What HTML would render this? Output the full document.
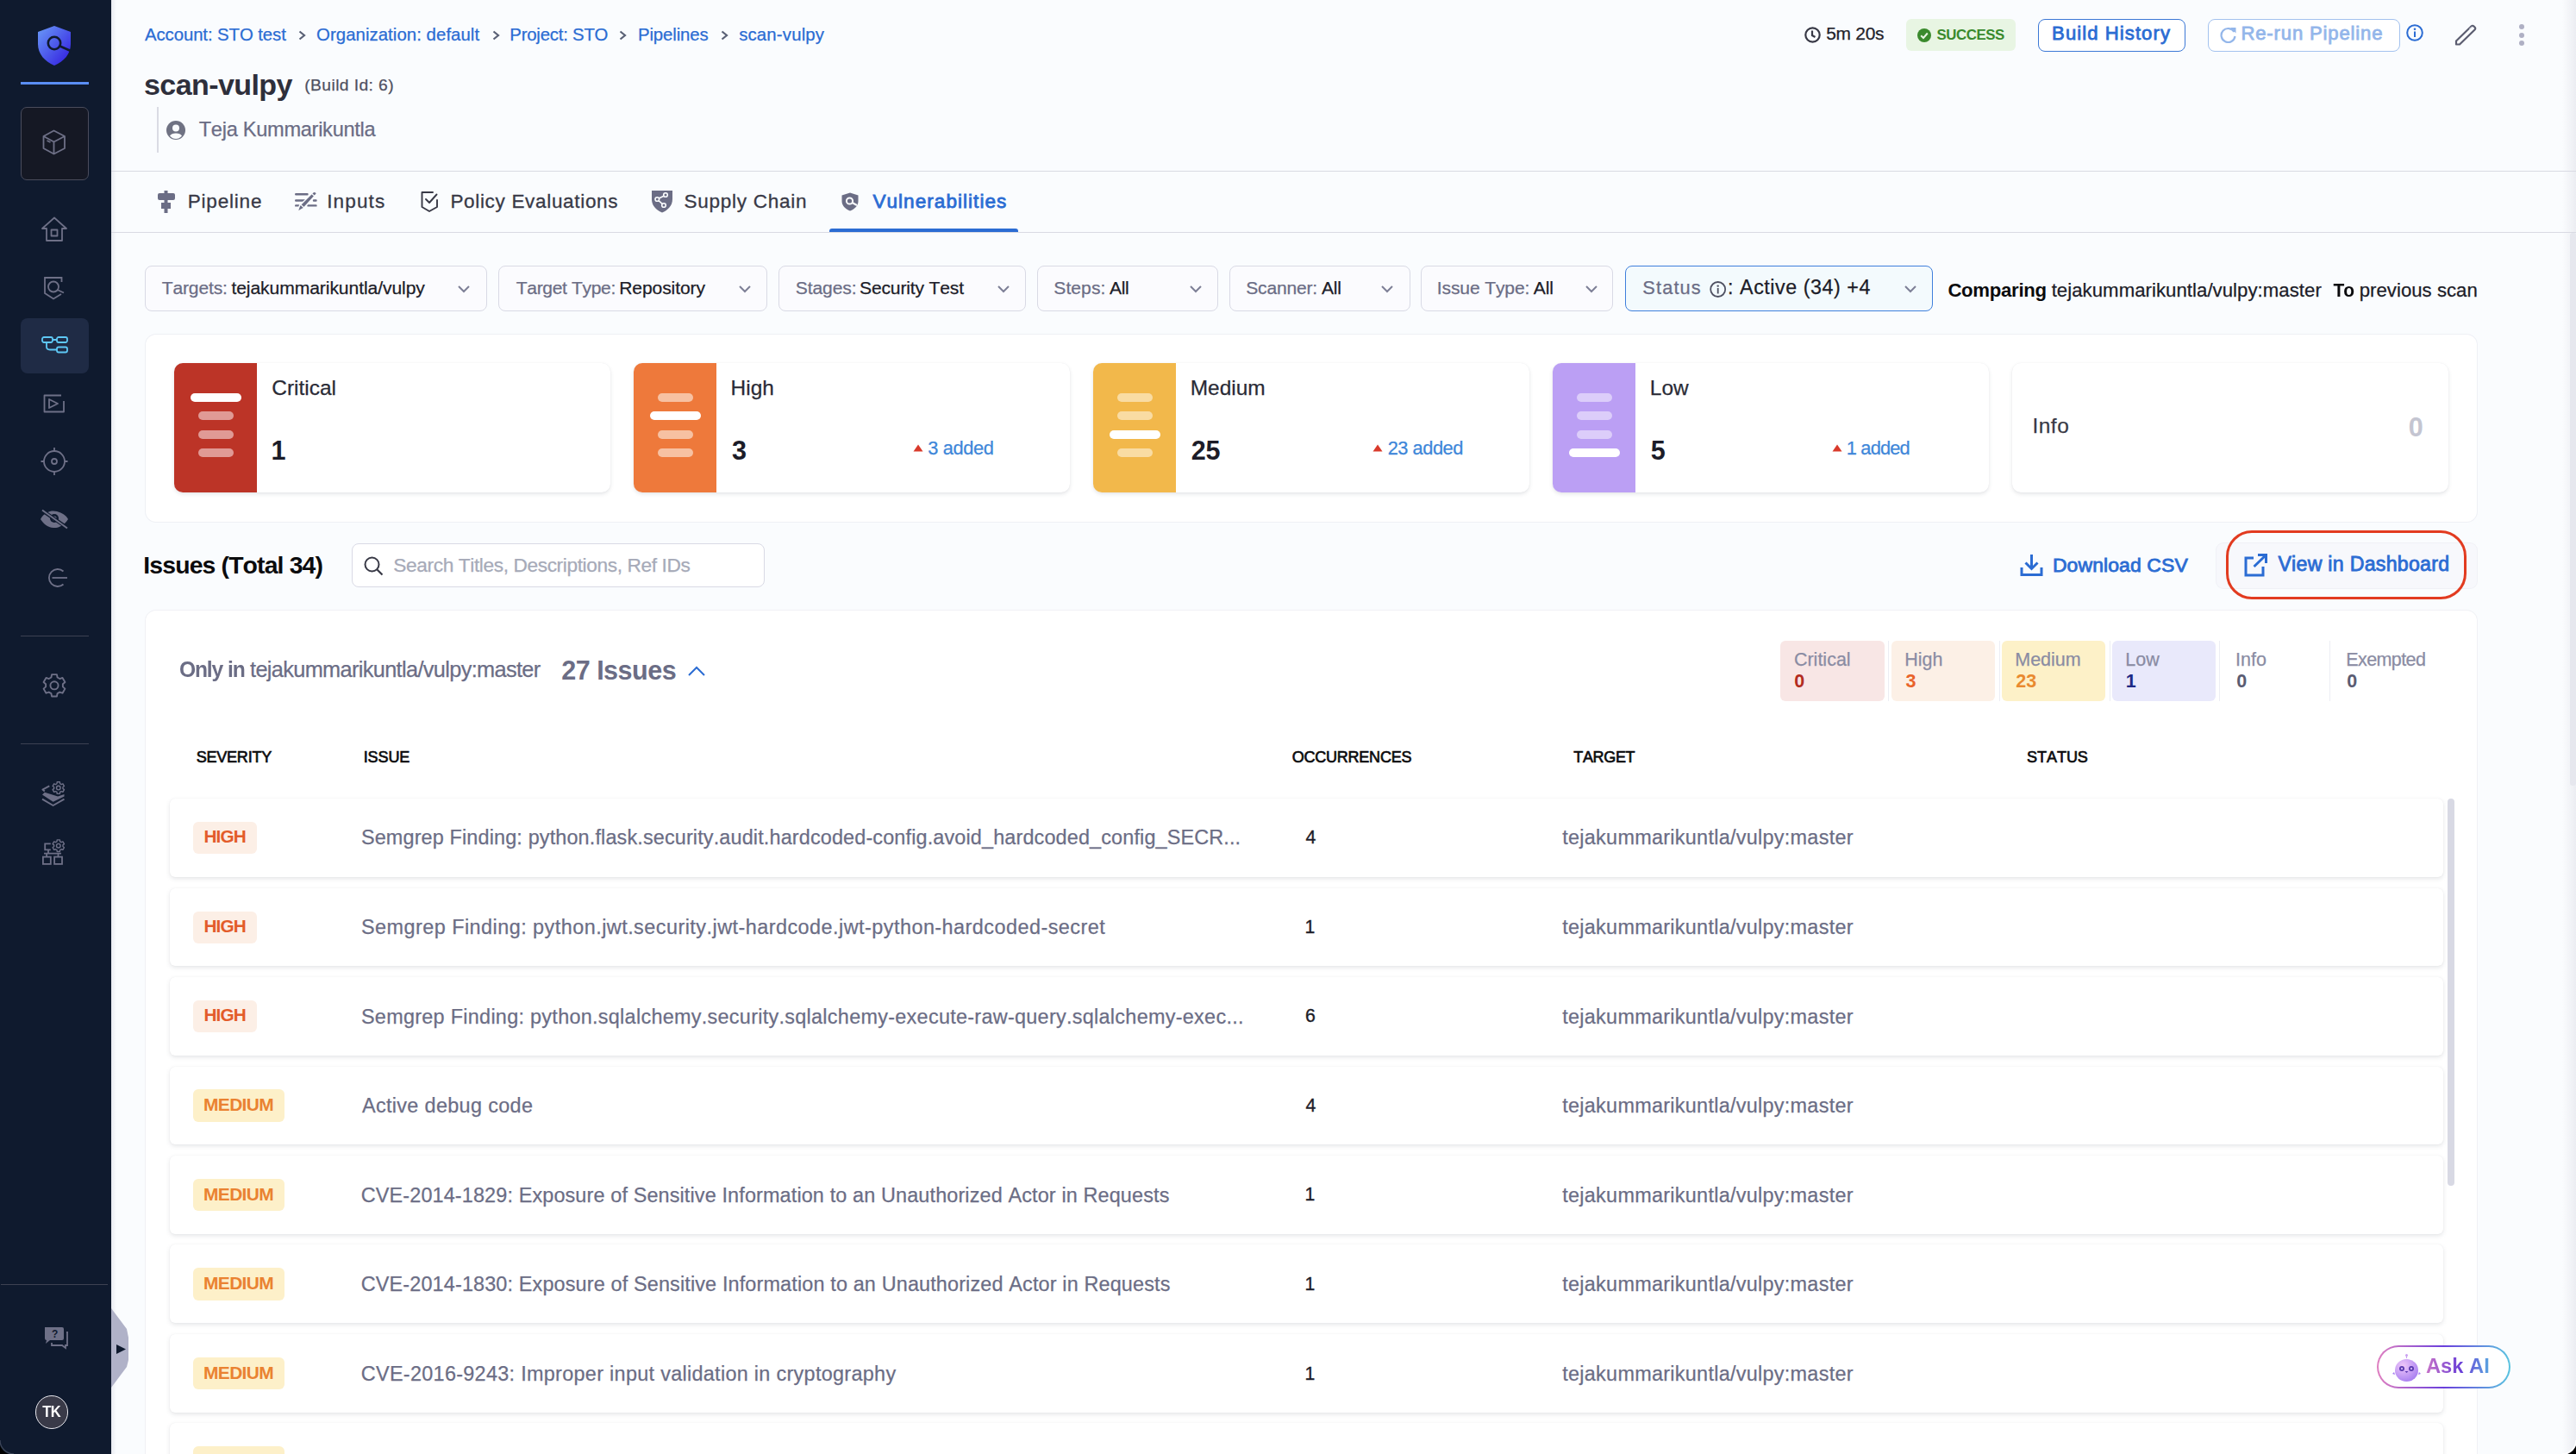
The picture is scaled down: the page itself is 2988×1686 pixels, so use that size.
<!DOCTYPE html>
<html><head><meta charset="utf-8"><title>scan-vulpy</title>
<style>
html,body{margin:0;padding:0;width:2988px;height:1686px;overflow:hidden;background:#000;}
body{position:relative;font-family:"Liberation Sans",sans-serif;font-kerning:none;}
.t{position:absolute;white-space:nowrap;line-height:1;}
.r{position:absolute;display:block;}
</style></head><body>
<div class="r" style="left:0.00px;top:0.00px;width:2988.00px;height:1686.00px;background:#fafcfe;"></div>
<div class="r" style="left:0.00px;top:0.00px;width:129.00px;height:1686.00px;background:#0f1a2e;"></div>
<div class="r" style="left:129.00px;top:0.00px;width:6.00px;height:1686.00px;background:linear-gradient(90deg,#e9ebf1,#fafcfe);"></div>
<div class="r" style="left:2972.00px;top:0.00px;width:16.00px;height:1686.00px;background:linear-gradient(90deg,rgba(230,231,238,0),#ecedf2);"></div>
<svg class="r" style="left:42.00px;top:29.00px;" width="42" height="48" viewBox="0 0 42 48"><defs><linearGradient id="lg" x1="0" y1="0" x2="1" y2="1"><stop offset="0" stop-color="#6a9bf8"/><stop offset="1" stop-color="#2f17de"/></linearGradient></defs>
<path d="M21 1 L40 8 L40 22 C40 34 32 42 21 47 C10 42 2 34 2 22 L2 8 Z" fill="url(#lg)"/>
<circle cx="21" cy="21" r="7.2" fill="none" stroke="#0f1a2e" stroke-width="2.6"/>
<path d="M27.5 24.5 L40 30" stroke="#0f1a2e" stroke-width="2.6"/></svg>
<div class="r" style="left:24.00px;top:95.00px;width:79.00px;height:3.00px;background:#5a8ef5;"></div>
<div class="r" style="left:24.00px;top:124.00px;width:79.00px;height:85.00px;background:#151824;border:1.5px solid #4a4c5c;border-radius:7px;box-sizing:border-box;"></div>
<svg class="r" style="left:49.00px;top:150.00px;" width="28" height="30" viewBox="0 0 28 30"><g fill="none" stroke="#6e7087" stroke-width="1.8" stroke-linejoin="round"><path d="M13.5 1.5 L26 8 L26 22 L13.5 28.5 L1.5 22 L1.5 8 Z"/><path d="M1.5 8 L13.5 14.5 L26 8 M13.5 14.5 L13.5 28.5"/><path d="M5.5 13 L9.5 15"/></g></svg>
<svg class="r" style="left:47.00px;top:251.00px;" width="32" height="30" viewBox="0 0 32 30"><g fill="none" stroke="#6e7087" stroke-width="1.8" stroke-linejoin="round"><path d="M2 14 L16 1.5 L30 14 L25 14 L25 28 L7 28 L7 14 Z"/><rect x="12.5" y="15.5" width="7" height="7"/></g></svg>
<svg class="r" style="left:50.00px;top:320.00px;" width="26" height="29" viewBox="0 0 26 29"><g fill="none" stroke="#6e7087" stroke-width="1.8"><path d="M21.5 7 L21.5 2 L2 2 L2 20 L12 26.5 L21 21"/><circle cx="12" cy="12.5" r="6"/><path d="M16.5 16 L24 19.5"/></g></svg>
<div class="r" style="left:24.00px;top:369.00px;width:79.00px;height:64.00px;background:#1f2b45;border-radius:8px;"></div>
<svg class="r" style="left:48.00px;top:390.00px;" width="31" height="20" viewBox="0 0 31 20"><g fill="none" stroke="#5ec8f5" stroke-width="1.8"><rect x="1" y="1" width="12" height="6" rx="2"/><rect x="18" y="1" width="12" height="6" rx="2"/><rect x="18" y="12.5" width="12" height="6" rx="2"/><path d="M13 4 L18 4 M6 7 L6 12 Q6 15.5 10 15.5 L18 15.5"/></g></svg>
<svg class="r" style="left:50.00px;top:457.00px;" width="26" height="22" viewBox="0 0 26 22"><g fill="none" stroke="#6e7087" stroke-width="1.8" stroke-linejoin="round"><path d="M21 1.5 L1.5 1.5 L1.5 20.5 L24 20.5 L24 8"/><path d="M7 6 L17 11 L7 16 Z"/></g></svg>
<svg class="r" style="left:47.00px;top:518.00px;" width="32" height="34" viewBox="0 0 32 34"><g fill="none" stroke="#6e7087" stroke-width="1.8"><circle cx="16" cy="17" r="12"/><circle cx="16" cy="17" r="3"/><path d="M16 1 L16 5 M16 29 L16 33 M0.5 17 L4 17 M28 17 L31.5 17"/></g></svg>
<svg class="r" style="left:46.00px;top:590.00px;" width="34" height="24" viewBox="0 0 34 24"><path d="M1 12 C6 3 14 1.5 20 3 C26 4.5 31 8 33 12 C29 19 22 22.5 16 22 C9 21.5 4 17 1 12 Z" fill="#6e7087"/><circle cx="17" cy="11" r="5" fill="#0f1a2e"/><circle cx="17" cy="11" r="2.6" fill="#6e7087"/><path d="M3 2 L32 22" stroke="#0f1a2e" stroke-width="4"/><path d="M3 1.5 L32 22.5" stroke="#6e7087" stroke-width="2"/></svg>
<svg class="r" style="left:52.00px;top:658.00px;" width="27" height="24" viewBox="0 0 27 24"><g fill="none" stroke="#6e7087" stroke-width="1.8"><path d="M21.5 4.5 A10 10 0 1 0 21.5 19.5"/><path d="M8.5 12 L26 12"/></g></svg>
<div class="r" style="left:24.00px;top:737.00px;width:79.00px;height:1.00px;background:#3d4152;"></div>
<svg class="r" style="left:40.00px;top:770.00px;" width="48" height="50" viewBox="0 0 48 50"><g fill="none" stroke="#6e7087" stroke-width="1.9" stroke-linejoin="round"><path d="M19.42 15.46 L20.08 12.13 L25.92 12.13 L26.58 15.46 L29.29 17.03 L32.51 15.93 L35.43 21.00 L32.88 23.24 L32.88 26.36 L35.43 28.60 L32.51 33.67 L29.29 32.57 L26.58 34.14 L25.92 37.47 L20.08 37.47 L19.42 34.14 L16.71 32.57 L13.49 33.67 L10.57 28.60 L13.12 26.36 L13.12 23.24 L10.57 21.00 L13.49 15.93 L16.71 17.03 Z"/><circle cx="23" cy="24.8" r="4.6"/></g></svg>
<div class="r" style="left:24.00px;top:862.00px;width:79.00px;height:1.00px;background:#3d4152;"></div>
<svg class="r" style="left:40.00px;top:896.00px;" width="48" height="50" viewBox="0 0 48 50"><g fill="none" stroke="#6e7087" stroke-width="1.4" stroke-linejoin="round"><path d="M25.94 12.75 L26.23 10.78 L29.37 10.78 L29.66 12.75 L31.07 13.56 L32.92 12.83 L34.49 15.55 L32.94 16.79 L32.94 18.41 L34.49 19.65 L32.92 22.37 L31.07 21.64 L29.66 22.45 L29.37 24.42 L26.23 24.42 L25.94 22.45 L24.53 21.64 L22.68 22.37 L21.11 19.65 L22.66 18.41 L22.66 16.79 L21.11 15.55 L22.68 12.83 L24.53 13.56 Z"/><circle cx="27.8" cy="17.6" r="2.3"/></g><g fill="none" stroke="#6e7087" stroke-width="1.9" stroke-linejoin="round"><path d="M17.3 15.3 L9.4 19.6 L11.8 21.6"/><path d="M9 30.6 L21.6 38 L34.5 30.6"/></g><path d="M9 25.5 L11.8 22.7 L27.1 27.6 L34.5 25.1 L34.5 27.6 L21.6 33.7 Z" fill="#6e7087"/></svg>
<svg class="r" style="left:40.00px;top:960.00px;" width="48" height="50" viewBox="0 0 48 50"><g fill="none" stroke="#6e7087" stroke-width="1.4" stroke-linejoin="round"><path d="M25.94 15.85 L26.23 13.88 L29.37 13.88 L29.66 15.85 L31.07 16.66 L32.92 15.93 L34.49 18.65 L32.94 19.89 L32.94 21.51 L34.49 22.75 L32.92 25.47 L31.07 24.74 L29.66 25.55 L29.37 27.52 L26.23 27.52 L25.94 25.55 L24.53 24.74 L22.68 25.47 L21.11 22.75 L22.66 21.51 L22.66 19.89 L21.11 18.65 L22.68 15.93 L24.53 16.66 Z"/><circle cx="27.8" cy="20.7" r="2.3"/></g><g fill="none" stroke="#6e7087" stroke-width="1.8"><path d="M18.8 18.4 L12.2 18.4 L12.2 25.4 L18.8 25.4 M16 25.4 L16 29.7 M11 29.7 L31 29.7 M14.1 29.7 L14.1 33.6 M27.5 29.7 L27.5 33.6"/><rect x="9.9" y="33.6" width="8.9" height="8.3"/><rect x="23.1" y="33.6" width="8.9" height="8.3"/></g></svg>
<div class="r" style="left:1.00px;top:1489.00px;width:124.00px;height:1.00px;background:#3d4152;"></div>
<svg class="r" style="left:50.00px;top:1537.00px;" width="30" height="28" viewBox="0 0 30 28"><path d="M2 2 L22 2 Q24 2 24 4 L24 15 Q24 17 22 17 L8 17 L3 21 L4 17 Q2 17 2 15 Z" fill="#6e7087"/><path d="M27 8 L28 8 L28 23 L26 23 L26 26 L22 23 L10 23 L10 20" fill="none" stroke="#6e7087" stroke-width="1.8"/><text x="10" y="14" font-family="Liberation Sans" font-weight="bold" font-size="12" fill="#0f1a2e">?</text></svg>
<div class="r" style="left:40.50px;top:1618.00px;width:38.50px;height:38.50px;background:#393a48;border:1.2px solid #e8e8ee;border-radius:50%;box-sizing:border-box;"></div>
<div class="t" style="left:49.31px;top:1629.92px;font-size:16.57px;letter-spacing:-0.746px;color:#ffffff;transform:scaleY(1.0974);transform-origin:0 14.08px;font-weight:bold;">TK</div>
<svg class="r" style="left:129.00px;top:1517.00px;" width="21" height="92" viewBox="0 0 21 92"><path d="M0 0 L18 24 L20 34 L20 60 L18 68 L0 92 Z" fill="#b0b2c8"/><path d="M6 42 L17 47.5 L6 53 Z" fill="#0f1a2e"/></svg>
<svg class="r" style="left:0.00px;top:1662.00px;" width="24" height="24" viewBox="0 0 24 24"><path d="M0 8 A16 16 0 0 0 16 24" fill="none" stroke="#3d4659" stroke-width="1.3"/><path d="M0 14.3 A17.2 17.2 0 0 0 9.7 24 L0 24 Z" fill="#000"/></svg>
<svg class="r" style="left:2964.00px;top:1662.00px;" width="24" height="24" viewBox="0 0 24 24"><path d="M24 8 A16 16 0 0 1 8 24" fill="none" stroke="#ffffff" stroke-width="1.6"/><path d="M24 14.3 A17.2 17.2 0 0 1 14.3 24 L24 24 Z" fill="#000"/></svg>
<div class="t" style="left:167.96px;top:29.69px;font-size:20.36px;letter-spacing:-0.081px;color:#2b6cd3;-webkit-text-stroke:0.25px #2b6cd3;">Account: STO test</div>
<div class="t" style="left:367.04px;top:29.69px;font-size:20.36px;letter-spacing:0.060px;color:#2b6cd3;-webkit-text-stroke:0.25px #2b6cd3;">Organization: default</div>
<div class="t" style="left:591.33px;top:29.69px;font-size:20.36px;letter-spacing:-0.219px;color:#2b6cd3;-webkit-text-stroke:0.25px #2b6cd3;">Project: STO</div>
<div class="t" style="left:739.93px;top:29.69px;font-size:20.36px;letter-spacing:-0.104px;color:#2b6cd3;-webkit-text-stroke:0.25px #2b6cd3;">Pipelines</div>
<div class="t" style="left:857.18px;top:29.69px;font-size:20.36px;letter-spacing:0.169px;color:#2b6cd3;-webkit-text-stroke:0.25px #2b6cd3;">scan-vulpy</div>
<svg class="r" style="left:346.00px;top:35.00px;" width="9" height="12" viewBox="0 0 9 12"><path d="M1.5 1.5 L7 6 L1.5 10.5" fill="none" stroke="#596075" stroke-width="2.2"/></svg>
<svg class="r" style="left:570.50px;top:35.00px;" width="9" height="12" viewBox="0 0 9 12"><path d="M1.5 1.5 L7 6 L1.5 10.5" fill="none" stroke="#596075" stroke-width="2.2"/></svg>
<svg class="r" style="left:718.00px;top:35.00px;" width="9" height="12" viewBox="0 0 9 12"><path d="M1.5 1.5 L7 6 L1.5 10.5" fill="none" stroke="#596075" stroke-width="2.2"/></svg>
<svg class="r" style="left:836.00px;top:35.00px;" width="9" height="12" viewBox="0 0 9 12"><path d="M1.5 1.5 L7 6 L1.5 10.5" fill="none" stroke="#596075" stroke-width="2.2"/></svg>
<div class="t" style="left:167.05px;top:81.10px;font-size:34.00px;letter-spacing:-0.582px;color:#2e2f3b;font-weight:bold;">scan-vulpy</div>
<div class="t" style="left:353.30px;top:88.62px;font-size:19.27px;letter-spacing:0.404px;color:#4f5162;-webkit-text-stroke:0.25px #4f5162;">(Build Id: 6)</div>
<div class="r" style="left:182.00px;top:124.00px;width:2.00px;height:53.00px;background:#dadbe4;"></div>
<svg class="r" style="left:193.00px;top:140.00px;" width="22" height="22" viewBox="0 0 22 22"><circle cx="11" cy="11" r="11" fill="#6f7283"/><circle cx="11" cy="8.5" r="4" fill="#fafcfe"/><path d="M4 17.5 C6 13.5 16 13.5 18 17.5 C16 20 13.5 21 11 21 C8.5 21 6 20 4 17.5 Z" fill="#fafcfe"/></svg>
<div class="t" style="left:230.72px;top:138.66px;font-size:23.64px;letter-spacing:-0.303px;color:#6b6d85;-webkit-text-stroke:0.25px #6b6d85;">Teja Kummarikuntla</div>
<svg class="r" style="left:2093.00px;top:31.00px;" width="19" height="19" viewBox="0 0 19 19"><g fill="none" stroke="#383946" stroke-width="2.2"><circle cx="9.5" cy="9.5" r="8.2"/><path d="M9 4.5 L9 10 L12.5 12"/></g></svg>
<div class="t" style="left:2118.16px;top:29.10px;font-size:20.95px;letter-spacing:-0.268px;color:#22222a;-webkit-text-stroke:0.25px #22222a;">5m 20s</div>
<div class="r" style="left:2211.00px;top:22.00px;width:127.00px;height:37.00px;background:#e8f5e3;border-radius:6px;"></div>
<svg class="r" style="left:2224.00px;top:33.00px;" width="16" height="16" viewBox="0 0 16 16"><circle cx="8" cy="8" r="8" fill="#3a8a2d"/><path d="M4.2 8.3 L7 11 L11.8 5.5" fill="none" stroke="#e8f5e3" stroke-width="2"/></svg>
<div class="t" style="left:2246.41px;top:32.56px;font-size:16.87px;letter-spacing:-0.429px;color:#3a8a2d;font-weight:bold;">SUCCESS</div>
<div class="r" style="left:2364.00px;top:22.00px;width:171.00px;height:38.00px;background:#fff;border:1.7px solid #3b78d6;border-radius:8px;box-sizing:border-box;"></div>
<div class="t" style="left:2380.09px;top:28.31px;font-size:22.11px;letter-spacing:1.064px;color:#2b6cd3;-webkit-text-stroke:0.80px #2b6cd3;">Build History</div>
<div class="r" style="left:2561.00px;top:22.00px;width:223.00px;height:38.00px;background:#fff;border:1.6px solid #a3c2ef;border-radius:8px;box-sizing:border-box;"></div>
<svg class="r" style="left:2575.00px;top:31.00px;" width="19" height="19" viewBox="0 0 19 19"><g fill="none" stroke="#93b6ea" stroke-width="2.2"><path d="M16.5 6 A8 8 0 1 0 17.5 11"/></g><path d="M12 1 L18.5 1 L18.5 7.5 Z" fill="#93b6ea"/></svg>
<div class="t" style="left:2599.44px;top:28.31px;font-size:22.11px;letter-spacing:0.833px;color:#93b6ea;-webkit-text-stroke:0.80px #93b6ea;">Re-run Pipeline</div>
<svg class="r" style="left:2791.00px;top:28.00px;" width="20" height="20" viewBox="0 0 20 20"><g fill="none" stroke="#2b6cd3" stroke-width="2"><circle cx="10" cy="10" r="8.8"/></g><circle cx="10" cy="5.8" r="1.3" fill="#2b6cd3"/><rect x="9" y="8.5" width="2" height="6.5" fill="#2b6cd3"/></svg>
<svg class="r" style="left:2847.00px;top:28.00px;" width="26" height="26" viewBox="0 0 26 26"><g fill="none" stroke="#5b5d70" stroke-width="2.2" stroke-linejoin="round"><path d="M2 19.5 L19.5 2.5 Q21 1 22.5 2.5 L23.5 3.5 Q25 5 23.5 6.5 L6 23.5 L2 23.5 Z"/></g><path d="M17 5.5 L20.5 3" stroke="#c0c1d0" stroke-width="1"/></svg>
<div class="r" style="left:2921.60px;top:28.00px;width:6.20px;height:6.20px;background:#afb0c4;border-radius:50%;"></div>
<div class="r" style="left:2921.60px;top:37.60px;width:6.20px;height:6.20px;background:#afb0c4;border-radius:50%;"></div>
<div class="r" style="left:2921.60px;top:47.20px;width:6.20px;height:6.20px;background:#afb0c4;border-radius:50%;"></div>
<div class="r" style="left:129.00px;top:198.00px;width:2859.00px;height:1.20px;background:#d9dae3;"></div>
<div class="r" style="left:129.00px;top:269.00px;width:2859.00px;height:1.20px;background:#d9dae3;"></div>
<svg class="r" style="left:183.00px;top:221.00px;" width="20" height="26" viewBox="0 0 20 26"><path d="M7.5 0 L11.5 0 L11.5 3 L18 3 Q20 3 20 5 L20 9 Q20 11 18 11 L11.5 11 L11.5 14 L15 14 L15 21 L11.5 21 L11.5 26 L7.5 26 L7.5 21 L4 21 L4 14 L7.5 14 L7.5 11 L2 11 Q0 11 0 9 L0 5 Q0 3 2 3 L7.5 3 Z" fill="#6b6d85"/></svg>
<div class="t" style="left:217.65px;top:222.64px;font-size:22.55px;letter-spacing:0.805px;color:#383946;-webkit-text-stroke:0.3px #383946;">Pipeline</div>
<svg class="r" style="left:340.00px;top:220.00px;" width="30" height="28" viewBox="0 0 30 28"><g stroke="#6b6d85" stroke-width="2.4" stroke-linecap="round" fill="none"><path d="M3.2 5.2 L16.5 5.2 M3.2 12.5 L13.5 12.5 M24 12.5 L26.5 12.5 M3.2 18.4 L6.4 18.4 M17.5 18.4 L26.5 18.4"/></g><path d="M23.5 2.5 Q26.5 1.5 27.5 4.5 L12 21.5 L5 25.5 L7.5 18.5 Z" fill="#6b6d85" stroke="#fafcfe" stroke-width="1.4"/><path d="M9 17.5 L12.8 21" stroke="#fafcfe" stroke-width="1.2"/><path d="M21.5 4.5 L25.5 8" stroke="#fafcfe" stroke-width="1.2"/></svg>
<div class="t" style="left:379.17px;top:222.64px;font-size:22.55px;letter-spacing:1.146px;color:#383946;-webkit-text-stroke:0.3px #383946;">Inputs</div>
<svg class="r" style="left:487.00px;top:221.00px;" width="22" height="25" viewBox="0 0 22 25"><g fill="none" stroke="#383946" stroke-width="1.9" stroke-linejoin="round" stroke-linecap="round"><path d="M15 2 L2.5 2 L2.5 19 L11 24 L20 19 L20 11"/><path d="M7 10 L11 14 L19.5 4.5"/></g></svg>
<div class="t" style="left:522.40px;top:222.64px;font-size:22.55px;letter-spacing:0.659px;color:#383946;-webkit-text-stroke:0.3px #383946;">Policy Evaluations</div>
<svg class="r" style="left:755.00px;top:220.00px;" width="26" height="27" viewBox="0 0 26 27"><path d="M1 1 L25 1 L25 11 C25 19 19 24 13 26.5 C7 24 1 19 1 11 Z" fill="#6b6d85"/><g fill="none" stroke="#fafcfe" stroke-width="1.6"><circle cx="17" cy="6" r="2.3"/><circle cx="7.3" cy="11" r="2.3"/><circle cx="15" cy="18" r="2.3"/><path d="M15 7.2 L9.3 10 M9 12.6 L13.2 16.4"/></g></svg>
<div class="t" style="left:793.48px;top:222.64px;font-size:22.55px;letter-spacing:0.717px;color:#383946;-webkit-text-stroke:0.3px #383946;">Supply Chain</div>
<svg class="r" style="left:976.00px;top:223.00px;" width="20" height="22" viewBox="0 0 20 22"><path d="M10 0.5 L19.5 3.5 L19.5 10 C19.5 16 15 19.5 10 21.5 C5 19.5 0.5 16 0.5 10 L0.5 3.5 Z" fill="#6b6d85"/><circle cx="9.5" cy="10" r="3.6" fill="none" stroke="#fafcfe" stroke-width="2"/><path d="M12.5 12 L18 15" stroke="#fafcfe" stroke-width="2"/></svg>
<div class="t" style="left:1012.40px;top:222.64px;font-size:22.55px;letter-spacing:1.040px;color:#2b6cd3;-webkit-text-stroke:0.81px #2b6cd3;">Vulnerabilities</div>
<div class="r" style="left:962.00px;top:265.30px;width:219.00px;height:3.70px;background:#2b6cd3;border-radius:3px 3px 0 0;"></div>
<div class="r" style="left:168.25px;top:308.00px;width:396.25px;height:53.00px;background:#fbfbfe;border:1.5px solid #d9dae5;border-radius:8px;box-sizing:border-box;"></div>
<div class="t" style="left:187.78px;top:322.82px;font-size:21.09px;letter-spacing:-0.173px;color:#6b6d85;-webkit-text-stroke:0.25px #6b6d85;">Targets:</div>
<div class="t" style="left:268.43px;top:322.82px;font-size:21.09px;letter-spacing:-0.074px;color:#1c1c28;-webkit-text-stroke:0.25px #1c1c28;">tejakummarikuntla/vulpy</div>
<svg class="r" style="left:531.00px;top:330.50px;" width="14" height="9" viewBox="0 0 14 9"><path d="M1 1 L7 7 L13 1" fill="none" stroke="#7d7f96" stroke-width="2"/></svg>
<div class="r" style="left:578.25px;top:308.00px;width:311.25px;height:53.00px;background:#fbfbfe;border:1.5px solid #d9dae5;border-radius:8px;box-sizing:border-box;"></div>
<div class="t" style="left:598.78px;top:322.82px;font-size:21.09px;letter-spacing:-0.356px;color:#6b6d85;-webkit-text-stroke:0.25px #6b6d85;">Target Type:</div>
<div class="t" style="left:718.27px;top:322.82px;font-size:21.09px;letter-spacing:-0.115px;color:#1c1c28;-webkit-text-stroke:0.25px #1c1c28;">Repository</div>
<svg class="r" style="left:856.50px;top:330.50px;" width="14" height="9" viewBox="0 0 14 9"><path d="M1 1 L7 7 L13 1" fill="none" stroke="#7d7f96" stroke-width="2"/></svg>
<div class="r" style="left:903.25px;top:308.00px;width:286.25px;height:53.00px;background:#fbfbfe;border:1.5px solid #d9dae5;border-radius:8px;box-sizing:border-box;"></div>
<div class="t" style="left:922.79px;top:322.82px;font-size:21.09px;letter-spacing:-0.106px;color:#6b6d85;-webkit-text-stroke:0.25px #6b6d85;">Stages:</div>
<div class="t" style="left:997.04px;top:322.82px;font-size:21.09px;letter-spacing:-0.163px;color:#1c1c28;-webkit-text-stroke:0.25px #1c1c28;">Security Test</div>
<svg class="r" style="left:1156.50px;top:330.50px;" width="14" height="9" viewBox="0 0 14 9"><path d="M1 1 L7 7 L13 1" fill="none" stroke="#7d7f96" stroke-width="2"/></svg>
<div class="r" style="left:1203.25px;top:308.00px;width:209.25px;height:53.00px;background:#fbfbfe;border:1.5px solid #d9dae5;border-radius:8px;box-sizing:border-box;"></div>
<div class="t" style="left:1222.29px;top:322.82px;font-size:21.09px;letter-spacing:0.068px;color:#6b6d85;-webkit-text-stroke:0.25px #6b6d85;">Steps:</div>
<div class="t" style="left:1286.96px;top:322.82px;font-size:21.09px;letter-spacing:-0.368px;color:#1c1c28;-webkit-text-stroke:0.25px #1c1c28;">All</div>
<svg class="r" style="left:1379.50px;top:330.50px;" width="14" height="9" viewBox="0 0 14 9"><path d="M1 1 L7 7 L13 1" fill="none" stroke="#7d7f96" stroke-width="2"/></svg>
<div class="r" style="left:1426.25px;top:308.00px;width:209.25px;height:53.00px;background:#fbfbfe;border:1.5px solid #d9dae5;border-radius:8px;box-sizing:border-box;"></div>
<div class="t" style="left:1445.29px;top:322.82px;font-size:21.09px;letter-spacing:-0.219px;color:#6b6d85;-webkit-text-stroke:0.25px #6b6d85;">Scanner:</div>
<div class="t" style="left:1532.96px;top:322.82px;font-size:21.09px;letter-spacing:-0.243px;color:#1c1c28;-webkit-text-stroke:0.25px #1c1c28;">All</div>
<svg class="r" style="left:1602.00px;top:330.50px;" width="14" height="9" viewBox="0 0 14 9"><path d="M1 1 L7 7 L13 1" fill="none" stroke="#7d7f96" stroke-width="2"/></svg>
<div class="r" style="left:1648.25px;top:308.00px;width:223.00px;height:53.00px;background:#fbfbfe;border:1.5px solid #d9dae5;border-radius:8px;box-sizing:border-box;"></div>
<div class="t" style="left:1666.80px;top:322.82px;font-size:21.09px;letter-spacing:-0.140px;color:#6b6d85;-webkit-text-stroke:0.25px #6b6d85;">Issue Type:</div>
<div class="t" style="left:1778.71px;top:322.82px;font-size:21.09px;letter-spacing:-0.118px;color:#1c1c28;-webkit-text-stroke:0.25px #1c1c28;">All</div>
<svg class="r" style="left:1838.50px;top:330.50px;" width="14" height="9" viewBox="0 0 14 9"><path d="M1 1 L7 7 L13 1" fill="none" stroke="#7d7f96" stroke-width="2"/></svg>
<div class="r" style="left:1885.00px;top:308.00px;width:357.00px;height:53.00px;background:#f3fafd;border:1.7px solid #3f7fdc;border-radius:8px;box-sizing:border-box;"></div>
<div class="t" style="left:1905.26px;top:322.70px;font-size:21.82px;letter-spacing:1.135px;color:#6b6d85;-webkit-text-stroke:0.25px #6b6d85;">Status</div>
<svg class="r" style="left:1983.00px;top:326.00px;" width="20" height="19" viewBox="0 0 20 19"><circle cx="9.7" cy="9.5" r="8.5" fill="none" stroke="#4f5162" stroke-width="1.8"/><circle cx="9.7" cy="5.6" r="1.2" fill="#4f5162"/><rect x="8.8" y="8" width="1.8" height="6.5" fill="#4f5162"/></svg>
<div class="t" style="left:2004.12px;top:321.97px;font-size:23.27px;letter-spacing:0.543px;color:#1c1c28;-webkit-text-stroke:0.25px #1c1c28;">: Active (34) +4</div>
<svg class="r" style="left:2208.50px;top:330.50px;" width="14" height="9" viewBox="0 0 14 9"><path d="M1 1 L7 7 L13 1" fill="none" stroke="#7d7f96" stroke-width="2"/></svg>
<div class="t" style="left:2259.39px;top:325.55px;font-size:22.18px;letter-spacing:-0.285px;color:#0b0b0d;font-weight:bold;">Comparing</div>
<div class="t" style="left:2379.66px;top:325.55px;font-size:22.18px;letter-spacing:0.049px;color:#1c1c28;-webkit-text-stroke:0.25px #1c1c28;">tejakummarikuntla/vulpy:master</div>
<div class="t" style="left:2706.46px;top:326.59px;font-size:20.95px;letter-spacing:-0.943px;color:#0b0b0d;transform:scaleY(1.0587);transform-origin:0 17.81px;font-weight:bold;">To</div>
<div class="t" style="left:2736.77px;top:325.55px;font-size:22.18px;letter-spacing:0.018px;color:#1c1c28;-webkit-text-stroke:0.25px #1c1c28;">previous scan</div>
<div class="r" style="left:168.50px;top:387.50px;width:2704.50px;height:217.00px;background:#fff;border-radius:12px;box-shadow:0 0 0 1px #eef0f5;"></div>
<div class="r" style="left:202.00px;top:421.00px;width:505.60px;height:150.30px;background:#fff;border-radius:10px;box-shadow:0 2px 4px rgba(96,97,112,0.16),0 0 1px rgba(40,41,61,0.08);"></div>
<div class="r" style="left:202.00px;top:421.00px;width:96.00px;height:150.30px;background:#bc3427;border-radius:10px 0 0 10px;"></div>
<div class="r" style="left:220.50px;top:456.00px;width:59.00px;height:10.00px;background:#fff;border-radius:5px;"></div>
<div class="r" style="left:229.50px;top:477.00px;width:41.00px;height:10.00px;background:#e09a95;border-radius:5px;"></div>
<div class="r" style="left:229.50px;top:498.80px;width:41.00px;height:10.00px;background:#e09a95;border-radius:5px;"></div>
<div class="r" style="left:229.50px;top:520.00px;width:41.00px;height:10.00px;background:#e09a95;border-radius:5px;"></div>
<div class="t" style="left:315.26px;top:438.43px;font-size:24.44px;letter-spacing:0.000px;color:#2a2b36;-webkit-text-stroke:0.25px #2a2b36;">Critical</div>
<div class="t" style="left:314.58px;top:507.04px;font-size:30.55px;letter-spacing:0.000px;color:#1c1c28;font-weight:bold;">1</div>
<div class="r" style="left:735.10px;top:421.00px;width:505.60px;height:150.30px;background:#fff;border-radius:10px;box-shadow:0 2px 4px rgba(96,97,112,0.16),0 0 1px rgba(40,41,61,0.08);"></div>
<div class="r" style="left:735.10px;top:421.00px;width:96.00px;height:150.30px;background:#ee793b;border-radius:10px 0 0 10px;"></div>
<div class="r" style="left:762.60px;top:456.00px;width:41.00px;height:10.00px;background:#f7c1a2;border-radius:5px;"></div>
<div class="r" style="left:753.60px;top:477.00px;width:59.00px;height:10.00px;background:#fff;border-radius:5px;"></div>
<div class="r" style="left:762.60px;top:498.80px;width:41.00px;height:10.00px;background:#f7c1a2;border-radius:5px;"></div>
<div class="r" style="left:762.60px;top:520.00px;width:41.00px;height:10.00px;background:#f7c1a2;border-radius:5px;"></div>
<div class="t" style="left:847.60px;top:438.43px;font-size:24.44px;letter-spacing:0.000px;color:#2a2b36;-webkit-text-stroke:0.25px #2a2b36;">High</div>
<div class="t" style="left:848.90px;top:507.04px;font-size:30.55px;letter-spacing:0.000px;color:#1c1c28;font-weight:bold;">3</div>
<div class="r" style="left:1268.20px;top:421.00px;width:505.60px;height:150.30px;background:#fff;border-radius:10px;box-shadow:0 2px 4px rgba(96,97,112,0.16),0 0 1px rgba(40,41,61,0.08);"></div>
<div class="r" style="left:1268.20px;top:421.00px;width:96.00px;height:150.30px;background:#f2b84b;border-radius:10px 0 0 10px;"></div>
<div class="r" style="left:1295.70px;top:456.00px;width:41.00px;height:10.00px;background:#f9dca3;border-radius:5px;"></div>
<div class="r" style="left:1295.70px;top:477.00px;width:41.00px;height:10.00px;background:#f9dca3;border-radius:5px;"></div>
<div class="r" style="left:1286.70px;top:498.80px;width:59.00px;height:10.00px;background:#fff;border-radius:5px;"></div>
<div class="r" style="left:1295.70px;top:520.00px;width:41.00px;height:10.00px;background:#f9dca3;border-radius:5px;"></div>
<div class="t" style="left:1380.70px;top:438.43px;font-size:24.44px;letter-spacing:0.000px;color:#2a2b36;-webkit-text-stroke:0.25px #2a2b36;">Medium</div>
<div class="t" style="left:1381.64px;top:507.04px;font-size:30.55px;letter-spacing:0.000px;color:#1c1c28;font-weight:bold;">25</div>
<div class="r" style="left:1801.30px;top:421.00px;width:505.60px;height:150.30px;background:#fff;border-radius:10px;box-shadow:0 2px 4px rgba(96,97,112,0.16),0 0 1px rgba(40,41,61,0.08);"></div>
<div class="r" style="left:1801.30px;top:421.00px;width:96.00px;height:150.30px;background:#bb9ff4;border-radius:10px 0 0 10px;"></div>
<div class="r" style="left:1828.80px;top:456.00px;width:41.00px;height:10.00px;background:#dccdfa;border-radius:5px;"></div>
<div class="r" style="left:1828.80px;top:477.00px;width:41.00px;height:10.00px;background:#dccdfa;border-radius:5px;"></div>
<div class="r" style="left:1828.80px;top:498.80px;width:41.00px;height:10.00px;background:#dccdfa;border-radius:5px;"></div>
<div class="r" style="left:1819.80px;top:520.00px;width:59.00px;height:10.00px;background:#fff;border-radius:5px;"></div>
<div class="t" style="left:1913.80px;top:438.43px;font-size:24.44px;letter-spacing:0.000px;color:#2a2b36;-webkit-text-stroke:0.25px #2a2b36;">Low</div>
<div class="t" style="left:1914.86px;top:507.04px;font-size:30.55px;letter-spacing:0.000px;color:#1c1c28;font-weight:bold;">5</div>
<svg class="r" style="left:1058.80px;top:515.00px;" width="12" height="9" viewBox="0 0 12 9"><path d="M6 0.5 L11.5 8.5 L0.5 8.5 Z" fill="#d93a2b"/></svg>
<div class="t" style="left:1076.37px;top:508.75px;font-size:21.82px;letter-spacing:-0.388px;color:#3d86d9;-webkit-text-stroke:0.25px #3d86d9;">3 added</div>
<svg class="r" style="left:1592.40px;top:515.00px;" width="12" height="9" viewBox="0 0 12 9"><path d="M6 0.5 L11.5 8.5 L0.5 8.5 Z" fill="#d93a2b"/></svg>
<div class="t" style="left:1609.70px;top:508.75px;font-size:21.82px;letter-spacing:-0.471px;color:#3d86d9;-webkit-text-stroke:0.25px #3d86d9;">23 added</div>
<svg class="r" style="left:2125.10px;top:515.00px;" width="12" height="9" viewBox="0 0 12 9"><path d="M6 0.5 L11.5 8.5 L0.5 8.5 Z" fill="#d93a2b"/></svg>
<div class="t" style="left:2141.84px;top:508.75px;font-size:21.82px;letter-spacing:-0.833px;color:#3d86d9;-webkit-text-stroke:0.25px #3d86d9;">1 added</div>
<div class="r" style="left:2334.40px;top:421.00px;width:505.60px;height:150.30px;background:#fff;border-radius:10px;box-shadow:0 2px 4px rgba(96,97,112,0.16),0 0 1px rgba(40,41,61,0.08);"></div>
<div class="t" style="left:2357.44px;top:482.23px;font-size:24.44px;letter-spacing:0.507px;color:#383946;-webkit-text-stroke:0.25px #383946;">Info</div>
<div class="t" style="left:2793.79px;top:480.04px;font-size:30.55px;letter-spacing:0.000px;color:#c4c5d1;font-weight:bold;">0</div>
<div class="t" style="left:166.30px;top:641.29px;font-size:28.36px;letter-spacing:-0.847px;color:#0b0b0d;font-weight:bold;">Issues (Total 34)</div>
<div class="r" style="left:408.40px;top:630.20px;width:478.70px;height:50.90px;background:#fff;border:1.5px solid #d9dae5;border-radius:8px;box-sizing:border-box;"></div>
<svg class="r" style="left:422.00px;top:645.00px;" width="23" height="23" viewBox="0 0 23 23"><circle cx="9.5" cy="9.5" r="8" fill="none" stroke="#383946" stroke-width="2"/><path d="M15.5 15.5 L21.5 21.5" stroke="#383946" stroke-width="2.2"/></svg>
<div class="t" style="left:456.37px;top:643.81px;font-size:22.69px;letter-spacing:-0.391px;color:#a6aab8;-webkit-text-stroke:0.25px #a6aab8;">Search Titles, Descriptions, Ref IDs</div>
<svg class="r" style="left:2343.00px;top:642.00px;" width="27" height="27" viewBox="0 0 27 27"><g fill="none" stroke="#2b6cd3" stroke-width="3"><path d="M13.5 1 L13.5 17 M6.5 10.5 L13.5 17.5 L20.5 10.5"/><path d="M2 16 L2 24.5 L25 24.5 L25 16"/></g></svg>
<div class="t" style="left:2380.91px;top:643.77px;font-size:22.98px;letter-spacing:0.095px;color:#2b6cd3;-webkit-text-stroke:0.83px #2b6cd3;">Download CSV</div>
<div class="r" style="left:2571.25px;top:629.60px;width:301.75px;height:52.90px;background:#f7f8fc;border-radius:8px;box-shadow:0 0 0 1px #f0f1f6;"></div>
<svg class="r" style="left:2603.00px;top:642.00px;" width="27" height="27" viewBox="0 0 27 27"><g fill="none" stroke="#2b6cd3" stroke-width="3"><path d="M11 5 L2 5 L2 25 L22 25 L22 15"/><path d="M11.5 15 L25 2 M16 1.5 L25.5 1.5 L25.5 11"/></g></svg>
<div class="t" style="left:2642.40px;top:643.44px;font-size:23.13px;letter-spacing:0.286px;color:#2b6cd3;-webkit-text-stroke:0.83px #2b6cd3;">View in Dashboard</div>
<div class="r" style="left:2582.25px;top:615.00px;width:278.35px;height:79.75px;border:3px solid #e23b20;border-radius:30px;box-sizing:border-box;"></div>
<div class="r" style="left:169.20px;top:708.20px;width:2703.80px;height:991.80px;background:#fff;border-radius:12px;box-shadow:0 0 0 1px #f0f1f5;"></div>
<div class="t" style="left:207.89px;top:764.81px;font-size:24.63px;letter-spacing:-1.109px;color:#6b6d85;transform:scaleY(1.0392);transform-origin:0 20.94px;font-weight:bold;">Only in</div>
<div class="t" style="left:290.02px;top:764.24px;font-size:25.31px;letter-spacing:-0.640px;color:#6b6d85;-webkit-text-stroke:0.25px #6b6d85;">tejakummarikuntla/vulpy:master</div>
<div class="t" style="left:651.24px;top:762.04px;font-size:30.55px;letter-spacing:-0.518px;color:#6b6d85;font-weight:bold;">27 Issues</div>
<svg class="r" style="left:797.00px;top:771.00px;" width="22" height="14" viewBox="0 0 22 14"><path d="M2 12 L11 3 L20 12" fill="none" stroke="#2b6cd3" stroke-width="2"/></svg>
<div class="r" style="left:2065.00px;top:743.00px;width:120.80px;height:69.80px;background:#f8e6e5;border-radius:6px;"></div>
<div class="t" style="left:2080.91px;top:755.40px;font-size:21.53px;letter-spacing:0.000px;color:#8a8ca3;-webkit-text-stroke:0.25px #8a8ca3;">Critical</div>
<div class="t" style="left:2081.15px;top:779.90px;font-size:21.53px;letter-spacing:0.000px;color:#b32d1f;font-weight:bold;">0</div>
<div class="r" style="left:2194.00px;top:743.00px;width:119.90px;height:69.80px;background:#fcf0e6;border-radius:6px;"></div>
<div class="t" style="left:2209.23px;top:755.40px;font-size:21.53px;letter-spacing:0.000px;color:#8a8ca3;-webkit-text-stroke:0.25px #8a8ca3;">High</div>
<div class="t" style="left:2210.51px;top:779.90px;font-size:21.53px;letter-spacing:0.000px;color:#e9632a;font-weight:bold;">3</div>
<div class="r" style="left:2322.00px;top:743.00px;width:119.90px;height:69.80px;background:#fdf1c8;border-radius:6px;"></div>
<div class="t" style="left:2337.23px;top:755.40px;font-size:21.53px;letter-spacing:0.000px;color:#8a8ca3;-webkit-text-stroke:0.25px #8a8ca3;">Medium</div>
<div class="t" style="left:2338.25px;top:779.90px;font-size:21.53px;letter-spacing:0.000px;color:#e98a2f;font-weight:bold;">23</div>
<div class="r" style="left:2450.00px;top:743.00px;width:120.00px;height:69.80px;background:#e9e9fb;border-radius:6px;"></div>
<div class="t" style="left:2465.23px;top:755.40px;font-size:21.53px;letter-spacing:0.000px;color:#8a8ca3;-webkit-text-stroke:0.25px #8a8ca3;">Low</div>
<div class="t" style="left:2465.64px;top:779.90px;font-size:21.53px;letter-spacing:0.000px;color:#1f2a86;font-weight:bold;">1</div>
<div class="r" style="left:2190.40px;top:743.00px;width:1.00px;height:69.80px;background:#eceef4;"></div>
<div class="r" style="left:2318.50px;top:743.00px;width:1.00px;height:69.80px;background:#eceef4;"></div>
<div class="r" style="left:2446.50px;top:743.00px;width:1.00px;height:69.80px;background:#eceef4;"></div>
<div class="r" style="left:2574.20px;top:743.00px;width:1.00px;height:69.80px;background:#eceef4;"></div>
<div class="r" style="left:2702.30px;top:743.00px;width:1.00px;height:69.80px;background:#eceef4;"></div>
<div class="t" style="left:2593.01px;top:755.40px;font-size:21.53px;letter-spacing:0.000px;color:#8a8ca3;-webkit-text-stroke:0.25px #8a8ca3;">Info</div>
<div class="t" style="left:2594.15px;top:779.90px;font-size:21.53px;letter-spacing:0.000px;color:#5a5c72;font-weight:bold;">0</div>
<div class="t" style="left:2721.23px;top:755.40px;font-size:21.53px;letter-spacing:-0.596px;color:#8a8ca3;-webkit-text-stroke:0.25px #8a8ca3;">Exempted</div>
<div class="t" style="left:2722.15px;top:779.90px;font-size:21.53px;letter-spacing:0.000px;color:#5a5c72;font-weight:bold;">0</div>
<div class="t" style="left:227.68px;top:869.47px;font-size:18.04px;letter-spacing:-0.227px;color:#0b0b0d;-webkit-text-stroke:0.65px #0b0b0d;">SEVERITY</div>
<div class="t" style="left:421.74px;top:869.47px;font-size:18.04px;letter-spacing:-0.122px;color:#0b0b0d;-webkit-text-stroke:0.65px #0b0b0d;">ISSUE</div>
<div class="t" style="left:1498.65px;top:869.47px;font-size:18.04px;letter-spacing:-0.241px;color:#0b0b0d;-webkit-text-stroke:0.65px #0b0b0d;">OCCURRENCES</div>
<div class="t" style="left:1825.29px;top:869.47px;font-size:18.04px;letter-spacing:-0.366px;color:#0b0b0d;-webkit-text-stroke:0.65px #0b0b0d;">TARGET</div>
<div class="t" style="left:2350.98px;top:869.47px;font-size:18.04px;letter-spacing:-0.041px;color:#0b0b0d;-webkit-text-stroke:0.65px #0b0b0d;">STATUS</div>
<div class="r" style="left:197.00px;top:926.25px;width:2637.00px;height:90.75px;background:#fff;border-radius:6px;box-shadow:0 2px 5px rgba(96,97,112,0.16),0 0 1px rgba(40,41,61,0.09);"></div>
<div class="r" style="left:224.20px;top:953.10px;width:73.60px;height:37.20px;background:#fcefe6;border-radius:6px;"></div>
<div class="t" style="left:236.41px;top:960.42px;font-size:20.80px;letter-spacing:-0.869px;color:#e35c2a;font-weight:bold;">HIGH</div>
<div class="t" style="left:418.94px;top:960.29px;font-size:23.42px;letter-spacing:0.144px;color:#6b6d85;-webkit-text-stroke:0.25px #6b6d85;">Semgrep Finding: python.flask.security.audit.hardcoded-config.avoid_hardcoded_config_SECR...</div>
<div class="t" style="left:1514.51px;top:960.95px;font-size:21.24px;letter-spacing:0.000px;color:#1c1c28;-webkit-text-stroke:0.35px #1c1c28;">4</div>
<div class="t" style="left:1812.25px;top:960.29px;font-size:23.42px;letter-spacing:0.282px;color:#6b6d85;-webkit-text-stroke:0.25px #6b6d85;">tejakummarikuntla/vulpy:master</div>
<div class="r" style="left:197.00px;top:1029.67px;width:2637.00px;height:90.75px;background:#fff;border-radius:6px;box-shadow:0 2px 5px rgba(96,97,112,0.16),0 0 1px rgba(40,41,61,0.09);"></div>
<div class="r" style="left:224.20px;top:1056.52px;width:73.60px;height:37.20px;background:#fcefe6;border-radius:6px;"></div>
<div class="t" style="left:236.41px;top:1063.84px;font-size:20.80px;letter-spacing:-0.869px;color:#e35c2a;font-weight:bold;">HIGH</div>
<div class="t" style="left:418.94px;top:1063.91px;font-size:23.42px;letter-spacing:0.466px;color:#6b6d85;-webkit-text-stroke:0.25px #6b6d85;">Semgrep Finding: python.jwt.security.jwt-hardcode.jwt-python-hardcoded-secret</div>
<div class="t" style="left:1513.38px;top:1064.57px;font-size:21.24px;letter-spacing:0.000px;color:#1c1c28;-webkit-text-stroke:0.35px #1c1c28;">1</div>
<div class="t" style="left:1812.25px;top:1063.91px;font-size:23.42px;letter-spacing:0.282px;color:#6b6d85;-webkit-text-stroke:0.25px #6b6d85;">tejakummarikuntla/vulpy:master</div>
<div class="r" style="left:197.00px;top:1133.09px;width:2637.00px;height:90.75px;background:#fff;border-radius:6px;box-shadow:0 2px 5px rgba(96,97,112,0.16),0 0 1px rgba(40,41,61,0.09);"></div>
<div class="r" style="left:224.20px;top:1159.94px;width:73.60px;height:37.20px;background:#fcefe6;border-radius:6px;"></div>
<div class="t" style="left:236.41px;top:1167.26px;font-size:20.80px;letter-spacing:-0.869px;color:#e35c2a;font-weight:bold;">HIGH</div>
<div class="t" style="left:418.94px;top:1167.53px;font-size:23.42px;letter-spacing:0.286px;color:#6b6d85;-webkit-text-stroke:0.25px #6b6d85;">Semgrep Finding: python.sqlalchemy.security.sqlalchemy-execute-raw-query.sqlalchemy-exec...</div>
<div class="t" style="left:1513.92px;top:1168.19px;font-size:21.24px;letter-spacing:0.000px;color:#1c1c28;-webkit-text-stroke:0.35px #1c1c28;">6</div>
<div class="t" style="left:1812.25px;top:1167.53px;font-size:23.42px;letter-spacing:0.282px;color:#6b6d85;-webkit-text-stroke:0.25px #6b6d85;">tejakummarikuntla/vulpy:master</div>
<div class="r" style="left:197.00px;top:1236.51px;width:2637.00px;height:90.75px;background:#fff;border-radius:6px;box-shadow:0 2px 5px rgba(96,97,112,0.16),0 0 1px rgba(40,41,61,0.09);"></div>
<div class="r" style="left:224.00px;top:1263.36px;width:106.10px;height:37.60px;background:#fdf0c9;border-radius:6px;"></div>
<div class="t" style="left:236.10px;top:1271.36px;font-size:20.95px;letter-spacing:-0.677px;color:#ea8231;font-weight:bold;">MEDIUM</div>
<div class="t" style="left:419.95px;top:1271.15px;font-size:23.42px;letter-spacing:0.338px;color:#6b6d85;-webkit-text-stroke:0.25px #6b6d85;">Active debug code</div>
<div class="t" style="left:1514.51px;top:1271.81px;font-size:21.24px;letter-spacing:0.000px;color:#1c1c28;-webkit-text-stroke:0.35px #1c1c28;">4</div>
<div class="t" style="left:1812.25px;top:1271.15px;font-size:23.42px;letter-spacing:0.282px;color:#6b6d85;-webkit-text-stroke:0.25px #6b6d85;">tejakummarikuntla/vulpy:master</div>
<div class="r" style="left:197.00px;top:1339.93px;width:2637.00px;height:90.75px;background:#fff;border-radius:6px;box-shadow:0 2px 5px rgba(96,97,112,0.16),0 0 1px rgba(40,41,61,0.09);"></div>
<div class="r" style="left:224.00px;top:1366.78px;width:106.10px;height:37.60px;background:#fdf0c9;border-radius:6px;"></div>
<div class="t" style="left:236.10px;top:1374.78px;font-size:20.95px;letter-spacing:-0.677px;color:#ea8231;font-weight:bold;">MEDIUM</div>
<div class="t" style="left:418.81px;top:1374.77px;font-size:23.42px;letter-spacing:0.133px;color:#6b6d85;-webkit-text-stroke:0.25px #6b6d85;">CVE-2014-1829: Exposure of Sensitive Information to an Unauthorized Actor in Requests</div>
<div class="t" style="left:1513.38px;top:1375.43px;font-size:21.24px;letter-spacing:0.000px;color:#1c1c28;-webkit-text-stroke:0.35px #1c1c28;">1</div>
<div class="t" style="left:1812.25px;top:1374.77px;font-size:23.42px;letter-spacing:0.282px;color:#6b6d85;-webkit-text-stroke:0.25px #6b6d85;">tejakummarikuntla/vulpy:master</div>
<div class="r" style="left:197.00px;top:1443.35px;width:2637.00px;height:90.75px;background:#fff;border-radius:6px;box-shadow:0 2px 5px rgba(96,97,112,0.16),0 0 1px rgba(40,41,61,0.09);"></div>
<div class="r" style="left:224.00px;top:1470.20px;width:106.10px;height:37.60px;background:#fdf0c9;border-radius:6px;"></div>
<div class="t" style="left:236.10px;top:1478.20px;font-size:20.95px;letter-spacing:-0.677px;color:#ea8231;font-weight:bold;">MEDIUM</div>
<div class="t" style="left:418.81px;top:1478.39px;font-size:23.42px;letter-spacing:0.145px;color:#6b6d85;-webkit-text-stroke:0.25px #6b6d85;">CVE-2014-1830: Exposure of Sensitive Information to an Unauthorized Actor in Requests</div>
<div class="t" style="left:1513.38px;top:1479.05px;font-size:21.24px;letter-spacing:0.000px;color:#1c1c28;-webkit-text-stroke:0.35px #1c1c28;">1</div>
<div class="t" style="left:1812.25px;top:1478.39px;font-size:23.42px;letter-spacing:0.282px;color:#6b6d85;-webkit-text-stroke:0.25px #6b6d85;">tejakummarikuntla/vulpy:master</div>
<div class="r" style="left:197.00px;top:1546.77px;width:2637.00px;height:90.75px;background:#fff;border-radius:6px;box-shadow:0 2px 5px rgba(96,97,112,0.16),0 0 1px rgba(40,41,61,0.09);"></div>
<div class="r" style="left:224.00px;top:1573.62px;width:106.10px;height:37.60px;background:#fdf0c9;border-radius:6px;"></div>
<div class="t" style="left:236.10px;top:1581.62px;font-size:20.95px;letter-spacing:-0.677px;color:#ea8231;font-weight:bold;">MEDIUM</div>
<div class="t" style="left:418.81px;top:1582.01px;font-size:23.42px;letter-spacing:0.302px;color:#6b6d85;-webkit-text-stroke:0.25px #6b6d85;">CVE-2016-9243: Improper input validation in cryptography</div>
<div class="t" style="left:1513.38px;top:1582.67px;font-size:21.24px;letter-spacing:0.000px;color:#1c1c28;-webkit-text-stroke:0.35px #1c1c28;">1</div>
<div class="t" style="left:1812.25px;top:1582.01px;font-size:23.42px;letter-spacing:0.282px;color:#6b6d85;-webkit-text-stroke:0.25px #6b6d85;">tejakummarikuntla/vulpy:master</div>
<div class="r" style="left:197.00px;top:1650.19px;width:2637.00px;height:90.75px;background:#fff;border-radius:6px;box-shadow:0 2px 5px rgba(96,97,112,0.16),0 0 1px rgba(40,41,61,0.09);"></div>
<div class="r" style="left:224.00px;top:1677.04px;width:106.10px;height:37.60px;background:#fdf0c9;border-radius:6px;"></div>
<div class="t" style="left:236.10px;top:1685.04px;font-size:20.95px;letter-spacing:-0.677px;color:#ea8231;font-weight:bold;">MEDIUM</div>
<div class="r" style="left:2839.00px;top:925.70px;width:8.00px;height:449.70px;background:#d8d9e4;border-radius:4px;"></div>
<div class="r" style="left:2981.00px;top:270.00px;width:7.00px;height:641.00px;background:#e6e7ee;border-radius:3px;"></div>
<div class="r" style="left:2756.6px;top:1560.3px;width:155.9px;height:50.1px;border-radius:26px;background:linear-gradient(#fff,#fff) padding-box,linear-gradient(90deg,#e07fc0,#6a3fdc 50%,#5ac5e0) border-box;border:2px solid transparent;box-sizing:border-box;"></div>
<svg class="r" style="left:2775.00px;top:1569.00px;" width="33" height="34" viewBox="0 0 33 34"><defs><radialGradient id="bg1" cx="0.35" cy="0.3" r="0.8"><stop offset="0" stop-color="#f0c8fa"/><stop offset="1" stop-color="#a37af0"/></radialGradient></defs><circle cx="16.5" cy="2.5" r="1.5" fill="#c9a0f0"/><path d="M16.5 3 L16.5 6" stroke="#c9a0f0" stroke-width="1"/><ellipse cx="16.5" cy="20" rx="13.5" ry="13" fill="url(#bg1)"/><path d="M2 22 L0 24 L3 25 Z M31 22 L33 24 L30 25 Z" fill="#a37af0"/><circle cx="11" cy="18" r="3" fill="#5a3ab0"/><circle cx="22" cy="18" r="3" fill="#5a3ab0"/><circle cx="11" cy="18" r="1.2" fill="#c9b0f0"/><circle cx="22" cy="18" r="1.2" fill="#c9b0f0"/><path d="M14.5 21 L18.5 21 L16.5 23 Z" fill="#5a3ab0"/></svg>
<div class="t" style="left:2814.01px;top:1572.55px;font-size:23.71px;letter-spacing:-0.003px;color:#7a4fd6;font-weight:bold;background:linear-gradient(90deg,#c772c8,#6a3fd8 55%,#5aa7e0);-webkit-background-clip:text;background-clip:text;color:transparent;">Ask AI</div>
</body></html>
